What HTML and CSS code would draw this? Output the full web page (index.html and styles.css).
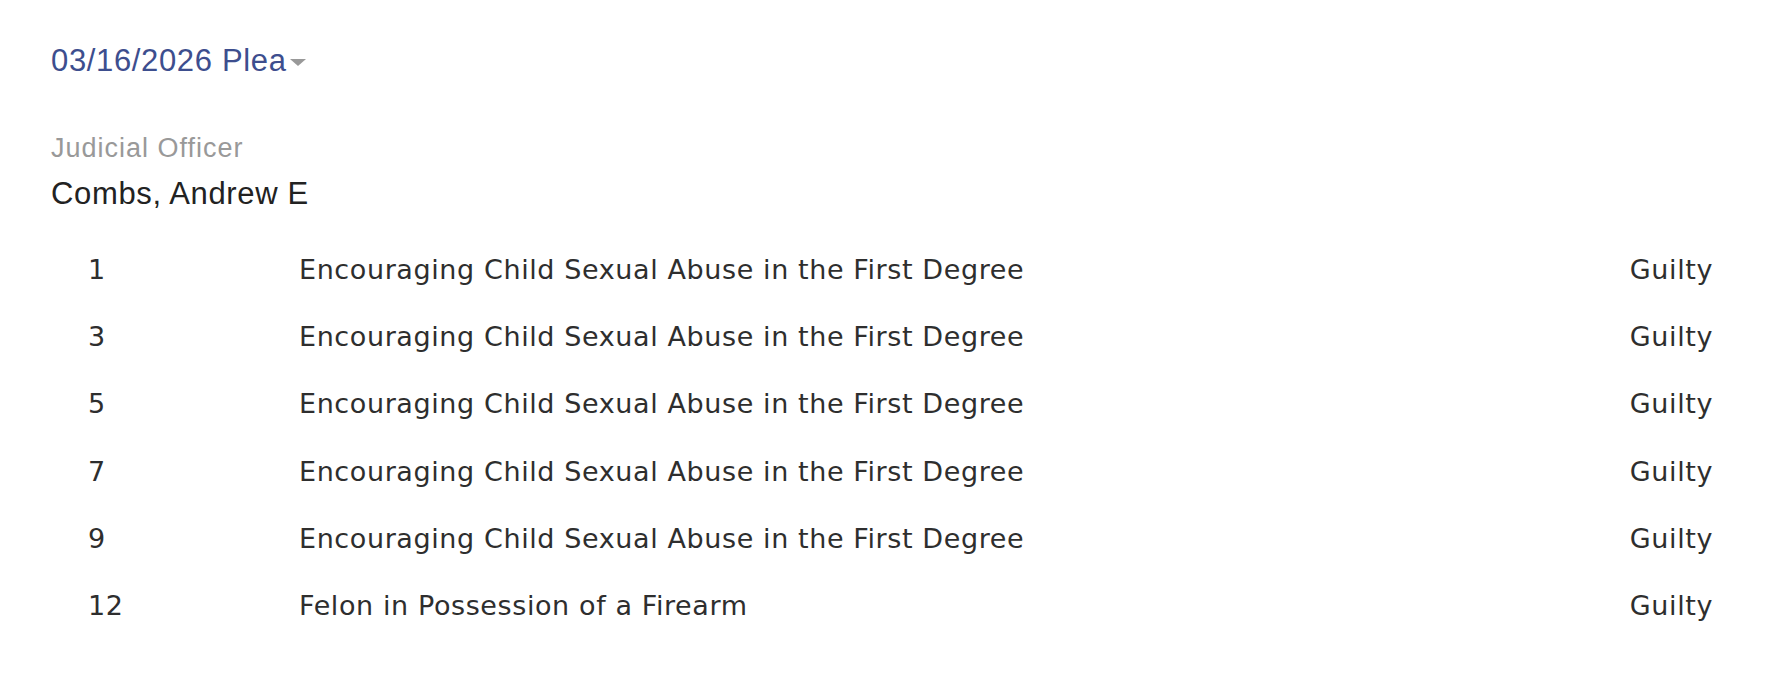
FILE: index.html
```html
<!DOCTYPE html>
<html lang="en">
<head>
<meta charset="utf-8">
<title>Plea</title>
<link rel="stylesheet" href="styles.css">
</head>
<body>
<div class="page">
  <div class="event-head">
    <span class="event-title">03/16/2026 Plea</span>
    <span class="caret"></span>
  </div>
  <div class="officer">
    <div class="officer-label">Judicial Officer</div>
    <div class="officer-name">Combs, Andrew E</div>
  </div>
  <div class="charges">
    <div class="charge"><span class="num">1</span><span class="desc">Encouraging Child Sexual Abuse in the First Degree</span><span class="plea">Guilty</span></div>
    <div class="charge"><span class="num">3</span><span class="desc">Encouraging Child Sexual Abuse in the First Degree</span><span class="plea">Guilty</span></div>
    <div class="charge"><span class="num">5</span><span class="desc">Encouraging Child Sexual Abuse in the First Degree</span><span class="plea">Guilty</span></div>
    <div class="charge"><span class="num">7</span><span class="desc">Encouraging Child Sexual Abuse in the First Degree</span><span class="plea">Guilty</span></div>
    <div class="charge"><span class="num">9</span><span class="desc">Encouraging Child Sexual Abuse in the First Degree</span><span class="plea">Guilty</span></div>
    <div class="charge"><span class="num">12</span><span class="desc">Felon in Possession of a Firearm</span><span class="plea">Guilty</span></div>
  </div>
</div>
</body>
</html>
```

FILE: styles.css
```css
html, body {
  margin: 0;
  padding: 0;
  background: #ffffff;
}

.page {
  padding: 44px 57px 0 51px;
  font-family: "Liberation Sans", Arial, sans-serif;
}

.event-head {
  display: flex;
  align-items: center;
  gap: 3px;
  height: 34px;
}

.event-title {
  font-size: 31px;
  line-height: 34px;
  letter-spacing: 0.65px;
  color: #3d4e8e;
}

.caret {
  width: 0;
  height: 0;
  border-left: 8px solid transparent;
  border-right: 8px solid transparent;
  border-top: 7px solid #999999;
  margin-top: 2px;
}

.officer {
  margin-top: 55px;
  display: flex;
  flex-direction: column;
  gap: 14px;
}

.officer-label {
  font-size: 27px;
  line-height: 30px;
  letter-spacing: 1px;
  color: #999999;
}

.officer-name {
  font-size: 31px;
  line-height: 34px;
  letter-spacing: 0.65px;
  color: #222222;
}

.charges {
  margin-top: 25px;
  padding-left: 37px;
  font-family: "DejaVu Sans", Verdana, sans-serif;
  font-size: 27px;
  letter-spacing: 0.6px;
  color: #2e2e2e;
}

.charge {
  display: grid;
  grid-template-columns: 211px 1fr auto;
  height: 67.2px;
  line-height: 67.2px;
}

.num, .desc, .plea {
  white-space: nowrap;
}
```
